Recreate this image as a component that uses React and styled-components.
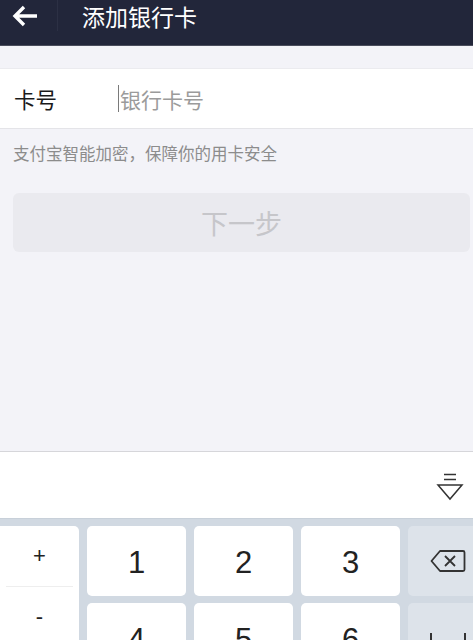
import React from "react";
import styled, { createGlobalStyle } from "styled-components";

const Global = createGlobalStyle`
  html, body { margin: 0; padding: 0; }
  body {
    background: #f3f3f8;
    font-family: "Noto Sans CJK SC", "Noto Sans", sans-serif;
    overflow: hidden;
  }
`;

const Page = styled.div`
  height: 640px;
  display: flex;
  flex-direction: column;
  background: #f3f3f8;
  overflow: hidden;
`;

const Header = styled.header`
  height: 46px;
  flex: none;
  box-sizing: border-box;
  background: #22263a;
  border-bottom: 1px solid #4a4d5c;
  display: flex;
  align-items: flex-start;
`;

const BackButton = styled.div`
  width: 58px;
  height: 31px;
  box-sizing: border-box;
  border-right: 1px solid #2c3044;
  display: flex;
  align-items: center;
  padding-left: 11px;
`;

const Title = styled.h1`
  margin: 0;
  padding-left: 24px;
  height: 32px;
  line-height: 32px;
  font-size: 23px;
  font-weight: 400;
  color: #ffffff;
`;

const Gap = styled.div`
  height: ${(p) => p.$h}px;
  flex: none;
`;

const FieldRow = styled.div`
  height: 61px;
  flex: none;
  box-sizing: border-box;
  background: #ffffff;
  border-top: 1px solid #ebebef;
  border-bottom: 1px solid #e4e4e8;
  display: flex;
  align-items: center;
`;

const FieldLabel = styled.span`
  width: 118px;
  padding-left: 14px;
  box-sizing: border-box;
  font-size: 21.5px;
  color: #1a1a1a;
`;

const Cursor = styled.span`
  width: 1px;
  height: 27px;
  background: #7a7a7a;
  margin-right: 1px;
`;

const Placeholder = styled.span`
  font-size: 21px;
  color: #9b9b9b;
`;

const Hint = styled.p`
  margin: 12px 0 0 13px;
  font-size: 16.5px;
  line-height: 24px;
  color: #8c8c8c;
`;

const NextButton = styled.div`
  margin: 28px 3px 0 13px;
  height: 59px;
  flex: none;
  border-radius: 6px;
  background: #eaeaef;
  display: flex;
  align-items: center;
  justify-content: center;
  font-size: 27px;
  color: #c6c6ca;
`;

const Filler = styled.div`
  flex: 1;
`;

const Toolbar = styled.div`
  height: 68px;
  flex: none;
  box-sizing: border-box;
  background: #ffffff;
  border-top: 1px solid #d6d6da;
  border-bottom: 1px solid #c8d0d9;
  display: flex;
  justify-content: flex-end;
  align-items: center;
  padding-right: 9px;
  padding-top: 3px;
`;

const Keyboard = styled.div`
  flex: none;
  height: 121px;
  background: #d1d9e2;
  padding-top: 7px;
  box-sizing: border-box;
  display: grid;
  grid-template-columns: 79px 99px 99px 99px 80px;
  grid-auto-rows: 70px;
  column-gap: 8px;
  row-gap: 7px;
`;

const SignColumn = styled.div`
  grid-row: 1 / span 3;
  background: #ffffff;
  border-radius: 0 5px 5px 0;
  display: flex;
  flex-direction: column;
`;

const SignKey = styled.div`
  height: 60px;
  display: flex;
  align-items: center;
  justify-content: center;
  font-family: "Liberation Sans", sans-serif;
  font-size: 22px;
  color: #222;
  margin: 0 6px;
  border-bottom: ${(p) => (p.$sep ? "1px solid #eeeeee" : "none")};
`;

const Key = styled.div`
  background: ${(p) => (p.$func ? "#dde3ea" : "#ffffff")};
  border-radius: 5px;
  display: flex;
  align-items: center;
  justify-content: center;
  font-family: "Liberation Sans", sans-serif;
  font-size: 31px;
  color: #222;
  padding-top: ${(p) => (p.$func ? 0 : 3)}px;
  box-sizing: border-box;
  grid-row: ${(p) => (p.$span ? `span ${p.$span}` : "auto")};
`;

const SpaceKey = styled(Key)`
  align-items: flex-start;
  padding-top: 30px;
  justify-content: flex-start;
  padding-left: 21px;
`;

const BackArrow = () => (
  <svg width="28" height="24" viewBox="0 0 28 24">
    <path
      d="M26 12H4M13 3L4 12l9 9"
      fill="none"
      stroke="#fff"
      strokeWidth="3.4"
      strokeLinecap="butt"
      strokeLinejoin="miter"
    />
  </svg>
);

const HideIcon = () => (
  <svg width="28" height="30" viewBox="0 0 28 30">
    <path
      d="M8 2.5h12M8 7.5h12M2 13h24L14 27z"
      fill="none"
      stroke="#333"
      strokeWidth="1.5"
      strokeLinejoin="miter"
    />
  </svg>
);

const DeleteIcon = () => (
  <svg width="36" height="24" viewBox="0 0 36 24">
    <path
      d="M10 2h23a1.5 1.5 0 0 1 1.5 1.5v17A1.5 1.5 0 0 1 33 22H10L1.5 12z"
      fill="none"
      stroke="#333"
      strokeWidth="1.8"
      strokeLinejoin="round"
    />
    <path d="M15 7l10 10M25 7L15 17" stroke="#333" strokeWidth="1.8" />
  </svg>
);

const SpaceIcon = () => (
  <svg width="38" height="14" viewBox="0 0 38 14">
    <path d="M2 0v11h34V0" fill="none" stroke="#333" strokeWidth="2" />
  </svg>
);

export default function App() {
  return (
    <>
      <Global />
      <Page>
        <Header>
          <BackButton>
            <BackArrow />
          </BackButton>
          <Title>添加银行卡</Title>
        </Header>
        <Gap $h={22} />
        <FieldRow>
          <FieldLabel>卡号</FieldLabel>
          <Cursor />
          <Placeholder>银行卡号</Placeholder>
        </FieldRow>
        <Hint>支付宝智能加密，保障你的用卡安全</Hint>
        <NextButton>下一步</NextButton>
        <Filler />
        <Toolbar>
          <HideIcon />
        </Toolbar>
        <Keyboard>
          <SignColumn>
            <SignKey $sep>+</SignKey>
            <SignKey>-</SignKey>
          </SignColumn>
          <Key>1</Key>
          <Key>2</Key>
          <Key>3</Key>
          <Key $func>
            <DeleteIcon />
          </Key>
          <Key>4</Key>
          <Key>5</Key>
          <Key>6</Key>
          <SpaceKey $func $span={2}>
            <SpaceIcon />
          </SpaceKey>
        </Keyboard>
      </Page>
    </>
  );
}
